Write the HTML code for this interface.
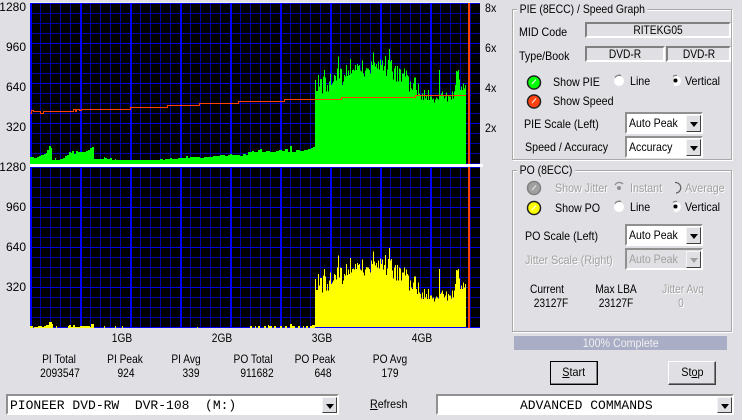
<!DOCTYPE html>
<html><head><meta charset="utf-8"><style>
html,body{margin:0;padding:0}
body{width:742px;height:420px;overflow:hidden;background:#e0dfe3;position:relative;font:12px/14px "Liberation Sans",Arial,sans-serif;color:#000}
.t{position:absolute;white-space:nowrap;transform:scaleX(.89);transform-origin:left center}
.c{position:absolute;white-space:nowrap;width:90px;text-align:center;transform:scaleX(.85)}
.r{position:absolute;white-space:nowrap;width:30px;text-align:right;left:-4px}
.d{color:#a0a0a0;text-shadow:1px 1px 0 #fff}
.g{position:absolute;border:1px solid #a8a8a8;box-shadow:1px 1px 0 #fff,inset 1px 1px 0 #fff;box-sizing:border-box}
.g span{position:absolute;left:4px;top:-8px;background:#e0dfe3;padding:0 3px;white-space:nowrap;transform:scaleX(.87);transform-origin:left center}
.f{position:absolute;box-sizing:border-box;border:2px solid;border-color:#808080 #fff #fff #808080;text-align:center;line-height:12px}
.f span{display:inline-block;transform:scaleX(.85)}
.cb{position:absolute;box-sizing:border-box;background:#fff;border:2px solid;border-color:#909090 #fff #fff #909090;padding:2px 0 0 2px;white-space:pre}
.cb span{display:inline-block;transform:scaleX(.88);transform-origin:left center}
.cb i{position:absolute;right:0;top:1px;bottom:0;width:15px;background:#e0dfe3;border:1px solid;border-color:#f4f4f4 #404040 #404040 #f4f4f4;box-sizing:border-box}
.cb i:after{content:"";position:absolute;left:3px;top:6px;border:4px solid transparent;border-top:5px solid #000;border-bottom:0}
.cb.dis{background:#e0dfe3;color:#a0a0a0}
.cb.dis i:after{border-top-color:#a0a0a0}
.m{font:13px/16px "Liberation Mono",monospace}
.b{position:absolute;box-sizing:border-box;width:48px;height:24px;background:#e0dfe3;border:1px solid;border-color:#fff #404040 #404040 #fff;box-shadow:inset -1px -1px 0 #808080;text-align:center;line-height:21px}
.b span{display:inline-block;transform:scaleX(.9)}
u{text-decoration:underline}
svg{position:absolute;left:0;top:0}
</style></head><body>
<svg width="742" height="420" viewBox="0 0 742 420" shape-rendering="crispEdges">
<defs>
<pattern id="a" x="30" y="3" width="10" height="10" patternUnits="userSpaceOnUse"><rect width="10" height="10" fill="#000"/><rect width="1" height="10" fill="#0000a8"/><rect width="10" height="1" fill="#0000a8"/></pattern>
<pattern id="b" x="30" y="7" width="10" height="10" patternUnits="userSpaceOnUse"><rect width="10" height="10" fill="#000"/><rect width="1" height="10" fill="#0000a8"/><rect width="10" height="1" fill="#0000a8"/></pattern>
<clipPath id="k"><rect x="30" y="167" width="450" height="160"/></clipPath>
<path id="p" d="M15 372V120H18V153H24V105H27V140H30V117H36V160H39V110H42V90H45V112H48V155H51V135H54V155H57V125H60V100H63V135H66V130H69V125H72V105H75V108H78V122H81V85H84V50H87V115H90V85H93V87H96V135H99V125H102V105H105V110H108V75H111V108H114V92H117V105H120V57H123V100H126V90H129V88H132V92H135V75H138V90H141V72H144V78H147V75H150V92H153V95H156V62H159V100H162V110H165V92H168V84H171V85H177V90H180V100H183V65H186V75H189V38H192V68H195V80H198V72H201V85H204V65H207V88H210V58H213V75H216V62H219V92H222V78H225V48H228V108H231V88H234V60H237V27H240V65H243V60H246V95H249V118H252V85H255V78H258V125H261V78H264V125H267V85H270V88H273V125H276V100H282V85H285V110H288V92H291V105H294V110H297V155H300V125H303V145H306V150H309V130H312V113H318V150H321V165H324V130H327V160H330V165H333V178H336V160H339V180H342V150H345V175H348V165H351V180H354V150H357V180H360V170H366V178H369V175H372V188H375V178H378V172H381V175H384V178H387V90H390V165H393V160H396V155H399V165H402V175H405V170H408V158H411V185H414V165H417V170H423V178H426V155H429V175H432V155H435V135H438V93H441V95H444V90H447V118H450V150H453V140H456V150H459V130H462V145H465V135H468V372Z"/>
</defs>
<rect x="30" y="3" width="450" height="161" fill="url(#a)"/>
<path fill="#0000e8" d="M30 43h450v1H30zM30 83h450v1H30zM30 123h450v1H30zM30 3h450v1H30z"/>
<path fill="#0000ff" d="M30 3h2v161h-2zM80 3h2v161h-2zM130 3h2v161h-2zM180 3h2v161h-2zM230 3h2v161h-2zM280 3h2v161h-2zM330 3h2v161h-2zM380 3h2v161h-2zM430 3h2v161h-2z"/>
<path fill="#00ff00" d="M30 164V157H34V158H37V157H39V156H41V155H44V154H46V153H47V150H49V146H51V148H52V160H55V158H56V160H60V159H63V158H65V156H67V155H69V152H71V153H72V151H74V154H76V151H78V152H86V151H88V150H90V148H92V147H94V159H104V157H105V158H107V159H110V158H112V160H115V159H116V160H160V159H163V160H165V159H170V158H172V159H178V158H186V156H188V158H190V157H200V158H204V157H210V157H213V156H220V155H225V156H228V155H230V154H232V155H240V156H243V154H246V155H248V152H252V151H254V152H258V150H260V149H262V152H266V151H270V152H276V151H279V150H282V151H285V149H288V152H290V146H292V152H296V150H300V151H304V150H308V149H311V148H313V147H315V164Z"/>
<use href="#p" transform="translate(310 40) scale(.33333)" fill="#00ff00"/>
<path fill="none" stroke="#ff4000" stroke-width="1" d="M30.500 113.500H31.500V110.500H33.500V111.500H40.500V113.500H43.500V111.500H73.500V109.500H75.500V111.500H76.500V109.500H79.500V110.500H81.500V109.500H130.500V107.500H167.500V105.500H199.500V103.500H238.500V101.500H284.500V99.500H341.500V97.500H415.500V95.500H466"/>
<rect x="468" y="3" width="2" height="161" fill="#ff4000"/>
<rect x="30" y="167" width="450" height="161" fill="url(#b)"/>
<path fill="#0000e8" d="M30 167h450v1H30zM30 207h450v1H30zM30 247h450v1H30zM30 287h450v1H30z"/>
<path fill="#0000ff" d="M30 167h2v161h-2zM80 167h2v161h-2zM130 167h2v161h-2zM180 167h2v161h-2zM230 167h2v161h-2zM280 167h2v161h-2zM330 167h2v161h-2zM380 167h2v161h-2zM430 167h2v161h-2zM30 327h450v1H30z"/>
<g clip-path="url(#k)"><use href="#p" transform="translate(310 239) scale(.33333)" fill="#ffff00"/></g>
<path fill="#ffff00" d="M30 328V326H33V328H34V327H38V326H42V327H44V326H46V325H49V322H52V324H53V328H56V326H57V328H68V326H69V325H71V327H73V325H75V327H80V326H88V326H90V327H91V324H94V328H104V326H105V328H115V326H116V328H122V326H123V328H197V327H198V328H250V326H252V328H255V326H256V328H258V326H260V328H264V326H266V328H268V325H269V326H272V328H274V326H276V328H280V326H282V328H285V326H287V328H290V324H292V326H295V328H298V326H300V328H303V326H304V328H306V326H308V328H310V326H312V325H315V328Z"/>
<rect x="468" y="167" width="2" height="161" fill="#ff4000"/>
<rect x="30" y="164" width="453" height="3" fill="#fff"/>
<rect x="30" y="2" width="450" height="1" fill="#f0f0f0"/>
</svg>

<div class="r" style="top:0">1280</div><div class="r" style="top:40px">960</div><div class="r" style="top:80px">640</div><div class="r" style="top:120px">320</div>
<div class="r" style="top:160px">1280</div><div class="r" style="top:200px">960</div><div class="r" style="top:240px">640</div><div class="r" style="top:280px">320</div>
<div class="t" style="left:485px;top:1px">8x</div><div class="t" style="left:485px;top:41px">6x</div><div class="t" style="left:485px;top:81px">4x</div><div class="t" style="left:485px;top:121px">2x</div>
<div class="c" style="left:77px;top:331px">1GB</div><div class="c" style="left:177px;top:331px">2GB</div><div class="c" style="left:277px;top:331px">3GB</div><div class="c" style="left:377px;top:331px">4GB</div>

<div class="c" style="left:14px;top:352px">PI Total</div><div class="c" style="left:80px;top:352px">PI Peak</div><div class="c" style="left:141px;top:352px">PI Avg</div><div class="c" style="left:208px;top:352px">PO Total</div><div class="c" style="left:270px;top:352px">PO Peak</div><div class="c" style="left:345px;top:352px">PO Avg</div>
<div class="c" style="left:15px;top:366px">2093547</div><div class="c" style="left:81px;top:366px">924</div><div class="c" style="left:146px;top:366px">339</div><div class="c" style="left:212px;top:366px">911682</div><div class="c" style="left:278px;top:366px">648</div><div class="c" style="left:345px;top:366px">179</div>

<div class="g" style="left:512px;top:9px;width:220px;height:151px"><span>PIE (8ECC) / Speed Graph</span></div>
<div class="t" style="left:519px;top:25px">MID Code</div>
<div class="f" style="left:585px;top:22px;width:146px;height:16px"><span>RITEKG05</span></div>
<div class="t" style="left:519px;top:49px">Type/Book</div>
<div class="f" style="left:585px;top:46px;width:80px;height:16px"><span>DVD-R</span></div>
<div class="f" style="left:666px;top:46px;width:65px;height:16px"><span>DVD-R</span></div>
<div class="t" style="left:553px;top:75px">Show PIE</div><div class="t" style="left:553px;top:94px">Show Speed</div>
<div class="t" style="left:630px;top:74px">Line</div><div class="t" style="left:685px;top:74px">Vertical</div>
<div class="t" style="left:524px;top:117px">PIE Scale (Left)</div>
<div class="cb" style="left:625px;top:112px;width:78px;height:22px"><span>Auto Peak</span><i></i></div>
<div class="t" style="left:525px;top:140px">Speed / Accuracy</div>
<div class="cb" style="left:625px;top:136px;width:78px;height:22px"><span>Accuracy</span><i></i></div>

<div class="g" style="left:512px;top:170px;width:220px;height:162px"><span>PO (8ECC)</span></div>
<div class="t d" style="left:555px;top:181px">Show Jitter</div><div class="t d" style="left:630px;top:181px">Instant</div><div class="t d" style="left:685px;top:181px">Average</div>
<div class="t" style="left:555px;top:201px">Show PO</div><div class="t" style="left:630px;top:200px">Line</div><div class="t" style="left:685px;top:200px">Vertical</div>
<div class="t" style="left:525px;top:229px">PO Scale (Left)</div>
<div class="cb" style="left:625px;top:224px;width:78px;height:22px"><span>Auto Peak</span><i></i></div>
<div class="t d" style="left:525px;top:253px">Jitter Scale (Right)</div>
<div class="cb dis" style="left:625px;top:248px;width:78px;height:22px"><span>Auto Peak</span><i></i></div>
<div class="c" style="left:502px;top:282px">Current</div><div class="c" style="left:571px;top:282px">Max LBA</div><div class="c d" style="left:638px;top:282px">Jitter Avq</div>
<div class="c" style="left:506px;top:296px">23127F</div><div class="c" style="left:571px;top:296px">23127F</div><div class="c d" style="left:636px;top:296px">0</div>

<div style="position:absolute;left:514px;top:336px;width:213px;height:14px;background:#a9adc5;color:#f0f0f0;text-align:center;line-height:14px"><span style="display:inline-block;transform:scaleX(.89)">100% Complete</span></div>
<div class="b" style="left:550px;top:361px;outline:1px solid #000;outline-offset:-1px"><span><u>S</u>tart</span></div>
<div class="b" style="left:668px;top:361px"><span>St<u>o</u>p</span></div>

<div class="cb m" style="left:6px;top:394px;width:333px;height:21px">PIONEER DVD-RW  DVR-108  (M:)<i></i></div>
<div class="t" style="left:370px;top:397px"><u>R</u>efresh</div>
<div class="cb m" style="left:436px;top:394px;width:298px;height:21px;padding-left:82px">ADVANCED COMMANDS<i></i></div>

<svg width="742" height="420" viewBox="0 0 742 420">
<circle cx="534" cy="82.500" r="6.500" fill="#00ff00" stroke="#202020" stroke-width="1.500"/><path d="M532 84L536 79.500" stroke="#d8ffd8" stroke-width="1.300" fill="none"/>
<circle cx="534" cy="101.500" r="6.500" fill="#ff4010" stroke="#202020" stroke-width="1.500"/><path d="M532 103L536 98.500" stroke="#ffd8c8" stroke-width="1.300" fill="none"/>
<circle cx="534" cy="188" r="6.500" fill="#a0a0a0" stroke="#808080" stroke-width="1.500"/><path d="M532 190L536 185.500" stroke="#e0e0e0" stroke-width="1.300" fill="none"/>
<circle cx="534" cy="208" r="6.500" fill="#ffff00" stroke="#202020" stroke-width="1.500"/><path d="M532 210L536 205.500" stroke="#ffffd8" stroke-width="1.300" fill="none"/>

<circle cx="619" cy="81" r="5" fill="#fff"/><path d="M615 77.500A5 5 0 0 1 621 75.500" fill="none" stroke="#808080" stroke-width="1.300"/>
<circle cx="676" cy="81" r="5" fill="#fff"/><path d="M673 76.500A5 5 0 0 1 677 75.500" fill="none" stroke="#808080" stroke-width="1.300"/><path d="M671 81A5 5 0 0 1 674 76.500V86A5 5 0 0 1 671 81Z" fill="#e0dfe3"/><circle cx="675.500" cy="80.500" r="2" fill="#000"/>

<circle cx="619" cy="188" r="5" fill="#e0dfe3"/><path d="M615 185A5 5 0 0 1 623 184" fill="none" stroke="#909090" stroke-width="1.300"/><circle cx="619" cy="188" r="2" fill="#909090"/>
<path d="M675 182.500A5 5 0 0 1 676 193" fill="none" stroke="#606060" stroke-width="1.200"/>

<circle cx="619" cy="207" r="5" fill="#fff"/><path d="M615 203.500A5 5 0 0 1 621 201.500" fill="none" stroke="#808080" stroke-width="1.300"/>
<circle cx="676" cy="207" r="5" fill="#fff"/><path d="M673 202.500A5 5 0 0 1 677 201.500" fill="none" stroke="#808080" stroke-width="1.300"/><path d="M671 207A5 5 0 0 1 674 202.500V212A5 5 0 0 1 671 207Z" fill="#e0dfe3"/><circle cx="675.500" cy="206.500" r="2" fill="#000"/>
</svg>
</body></html>
